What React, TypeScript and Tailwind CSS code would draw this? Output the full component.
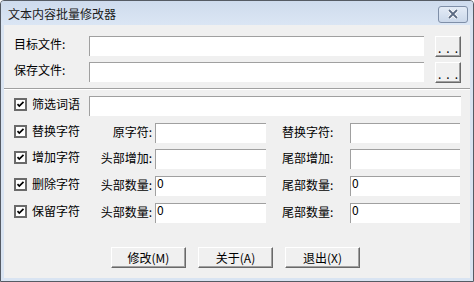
import React from 'react'

const sunken = 'bg-white border-t border-l border-[#a0a0a0]'
const raised =
  'bg-[#f0f0f0] border-t border-l border-t-white border-l-white border-r border-b border-r-[#696969] border-b-[#696969] shadow-[inset_-1px_-1px_0_#a0a0a0]'

function Check() {
  return (
    <svg width="13" height="13" viewBox="0 0 13 13" className="shrink-0">
      <rect x="0" y="0" width="13" height="13" fill="#6a6a6a" />
      <rect x="2" y="2" width="9" height="9" fill="#fff" />
      <path d="M3.5 6.2 L5.3 8 L9.5 3.8" stroke="#000" strokeWidth="1.7" fill="none" />
    </svg>
  )
}

function FileRow({ label, top }: { label: string; top: string }) {
  return (
    <div className={`flex items-start pl-[10px] ${top}`}>
      <span className="w-[75px] pt-[1px] leading-[14px]">{label}</span>
      <div className={`w-[335px] h-[20px] ${sunken}`} />
      <button className={`ml-[11px] w-[26px] h-[21px] ${raised} flex items-end justify-center pb-[4px] leading-[8px] tracking-[5px] pl-[5px]`}>
        ...
      </button>
    </div>
  )
}

function OptRow({
  name,
  left,
  right,
  value,
  top,
}: {
  name: string
  left: string
  right: string
  value?: string
  top: string
}) {
  return (
    <div className={`flex items-start pl-[10px] h-[20px] ${top}`}>
      <div className="w-[78px] flex items-center gap-[5px] pt-[1px]">
        <Check />
        <span className="leading-[14px]">{name}</span>
      </div>
      <span className="w-[60px] text-right pt-[2px] leading-[14px]">{left}</span>
      <div className={`ml-[3px] w-[111px] h-[20px] ${sunken} pl-[1px] leading-[12px] text-[12px]`}>{value}</div>
      <span className="ml-[16px] w-[68px] pt-[2px] leading-[14px]">{right}</span>
      <div className={`w-[110px] h-[20px] ${sunken} pl-[1px] leading-[12px] text-[12px]`}>{value}</div>
    </div>
  )
}

export default function App() {
  return (
    <div className="w-[474px] h-[282px] border border-[#555b64] rounded-t-[4px] bg-[#d9e4f2] flex flex-col font-['Noto_Sans_CJK_SC',sans-serif] text-[12px] text-black overflow-hidden">
      {/* Title bar */}
      <div className="h-[24px] shrink-0 flex items-center pl-[7px] pr-[5px] bg-gradient-to-b from-[#cedbed] to-[#dbe6f4]">
        <span className="flex-1 text-[#1b1b1b] leading-[14px] pt-[2px]">文本内容批量修改器</span>
        <div className="w-[30px] h-[17px] mt-[2px] rounded-[3px] border border-[#7f8fa8] bg-gradient-to-b from-[#e3ebf6] to-[#cbd8ea] flex items-center justify-center">
          <svg width="12" height="10" viewBox="0 0 12 10">
            <path d="M2 1 L10 9 M10 1 L2 9" stroke="#fff" strokeWidth="3.6" />
            <path d="M2 1 L10 9 M10 1 L2 9" stroke="#5b6a82" strokeWidth="1.8" />
          </svg>
        </div>
      </div>

      {/* Client */}
      <div className="flex-1 mx-[3px] mb-[3px] bg-[#f0f0f0] flex flex-col">
        <FileRow label="目标文件:" top="mt-[11px]" />
        <FileRow label="保存文件:" top="mt-[5px]" />

        <div className="mt-[5px] h-[2px] border-t border-[#a0a0a0] border-b border-b-white" />

        <div className="flex items-start pl-[10px] mt-[6px] h-[20px]">
          <div className="w-[75px] flex items-center gap-[5px] pt-[1px]">
            <Check />
            <span className="leading-[14px]">筛选词语</span>
          </div>
          <div className={`w-[372px] h-[20px] ${sunken}`} />
        </div>

        <OptRow name="替换字符" left="原字符:" right="替换字符:" top="mt-[7px]" />
        <OptRow name="增加字符" left="头部增加:" right="尾部增加:" top="mt-[6px]" />
        <OptRow name="删除字符" left="头部数量:" right="尾部数量:" value="0" top="mt-[7px]" />
        <OptRow name="保留字符" left="头部数量:" right="尾部数量:" value="0" top="mt-[7px]" />

        <div className="flex gap-[12px] pl-[107px] mt-[24px]">
          {['修改(M)', '关于(A)', '退出(X)'].map((t) => (
            <button key={t} className={`w-[75px] h-[21px] ${raised} leading-[14px]`}>
              {t}
            </button>
          ))}
        </div>
      </div>
    </div>
  )
}
